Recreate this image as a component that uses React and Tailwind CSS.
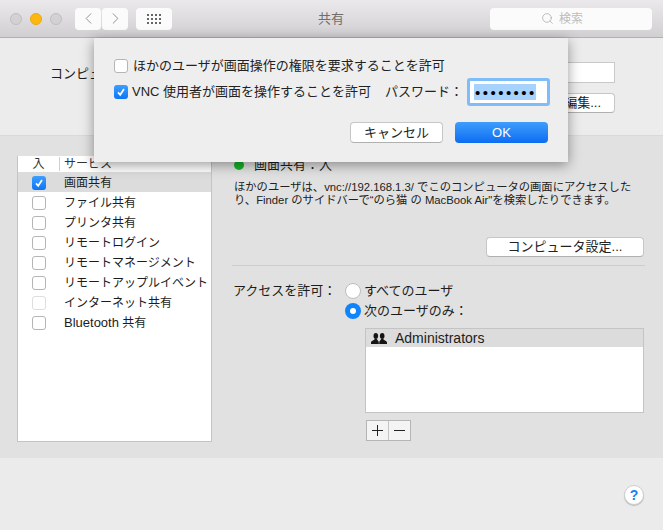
import { ChevronLeft, ChevronRight, Search } from "lucide-react";

const services = [
  { label: "画面共有", on: true },
  { label: "ファイル共有" },
  { label: "プリンタ共有" },
  { label: "リモートログイン" },
  { label: "リモートマネージメント" },
  { label: "リモートアップルイベント" },
  { label: "インターネット共有", dim: true },
  { label: <><span className="text-[13px]">Bluetooth</span> 共有</> },
];

const Check = ({ on, dim }) =>
  on ? (
    <span className="w-[14px] h-[14px] rounded-[3px] bg-gradient-to-b from-[#3d9fff] to-[#0a75f5] flex items-center justify-center shrink-0">
      <svg width="10" height="10" viewBox="0 0 10 10" fill="none">
        <path d="M2 5.4 L4.2 7.8 L8 2" stroke="#fff" strokeWidth="1.7" />
      </svg>
    </span>
  ) : (
    <span className={`w-[14px] h-[14px] rounded-[3px] bg-white border shrink-0 ${dim ? "border-[#dedede]" : "border-[#b5b5b5]"}`} />
  );

const PushButton = ({ children, className = "" }) => (
  <div className={`rounded-[4px] bg-white border border-[#c6c6c6] border-b-[#b0b0b0] flex items-center text-[13px] text-[#222] ${className}`}>
    {children}
  </div>
);

const People = () => (
  <svg width="16" height="11" viewBox="0 0 16 11" fill="#141414">
    <ellipse cx="4.8" cy="3" rx="2.3" ry="3" />
    <ellipse cx="11.2" cy="3" rx="2.3" ry="3" />
    <path d="M0 11 V9.6 C0 7.8 3 7.6 3.8 6 H5.8 C6.6 7.6 7.8 7.8 7.8 9.6 V11 Z" />
    <path d="M8.2 11 V9.6 C8.2 7.8 9.4 7.6 10.2 6 H12.2 C13 7.6 16 7.8 16 9.6 V11 Z" />
  </svg>
);

export default function App() {
  return (
    <div className="relative w-[663px] h-[530px] overflow-hidden bg-[#ebebeb] text-[13px] text-[#1c1c1c] font-['Liberation_Sans','Noto_Sans_CJK_JP',sans-serif]">
      {/* Title bar */}
      <div className="relative h-[38px] border-b border-[#b1b1b1] bg-gradient-to-b from-[#ebe9eb] to-[#d1cfd1] flex items-center pl-[10px]">
        <div className="flex items-center gap-2">
          <span className="w-[12px] h-[12px] rounded-full bg-[#d3d1d3] border border-[#c0bec0]" />
          <span className="w-[12px] h-[12px] rounded-full bg-[#fdb70e] border border-[#eaa90c]" />
          <span className="w-[12px] h-[12px] rounded-full bg-[#d3d1d3] border border-[#c0bec0]" />
        </div>
        <div className="flex gap-px ml-[13px]">
          <div className="w-[26px] h-[22px] rounded-[4px] bg-[#fbfbfb] flex items-center justify-center">
            <ChevronLeft size={19} strokeWidth={1.2} className="text-[#8d8d8d]" />
          </div>
          <div className="w-[26px] h-[22px] rounded-[4px] bg-[#fbfbfb] flex items-center justify-center">
            <ChevronRight size={19} strokeWidth={1.2} className="text-[#8d8d8d]" />
          </div>
        </div>
        <div className="w-[36px] h-[22px] ml-[8px] rounded-[4px] bg-[#fbfbfb] grid grid-cols-[repeat(4,2px)] grid-rows-[repeat(3,2px)] gap-[2px] content-center justify-center">
          {Array.from({ length: 12 }).map((_, i) => (
            <span key={i} className="bg-[#666]" />
          ))}
        </div>
        <span className="ml-[146px] text-[13px] text-[#6e6e6e]">共有</span>
        <div className="ml-[146px] w-[162px] h-[22px] rounded-[4px] bg-[#fbfbfb] flex items-center pl-[51px] gap-[5px] text-[12px] text-[#bdbdbd]">
          <Search size={13} strokeWidth={1.3} className="text-[#a5a5a5]" />
          <span>検索</span>
        </div>
      </div>

      {/* Computer name */}
      <div className="h-[98px] border-b border-[#d9d9d9] bg-[#ececec] flex">
        <span className="ml-[50px] mt-[27px] leading-[18px]">コンピュータ名:</span>
        <div className="ml-auto mr-[48px] mt-[24px] flex flex-col items-end gap-[10px]">
          <div className="w-[120px] h-[21px] bg-white border border-[#c9c9c9]" />
          <PushButton className="w-[100px] h-[20px] justify-end pr-[13px]">編集...</PushButton>
        </div>
      </div>

      {/* Main pane */}
      <div className="h-[322px] bg-[#e1e1e1] flex pt-[20px] pl-[17px]">
        <div className="w-[195px] h-[286px] bg-white border border-[#c4c4c4] border-t-0 shrink-0">
          <div className="h-[16px] flex items-center text-[12px] text-[#333]">
            <span className="w-[42px] text-center border-r border-[#cfcfcf] leading-[14px]">入</span>
            <span className="ml-[4px]">サービス</span>
          </div>
          {services.map((s, i) => (
            <div key={i} className={`h-[20px] pt-[2px] flex items-center text-[12px] ${s.on ? "bg-[#dcdcdc]" : ""}`}>
              <span className="w-[46px] pl-[14px] flex shrink-0">
                <Check on={s.on} dim={s.dim} />
              </span>
              <span className="whitespace-nowrap">{s.label}</span>
            </div>
          ))}
        </div>

        <div className="w-[413px] ml-[20px] flex flex-col">
          <div className="flex items-center h-[18px] pl-[2px]">
            <span className="w-[10px] h-[10px] rounded-full bg-[#15b52a]" />
            <span className="ml-[10px]">画面共有：入</span>
          </div>
          <p className="mt-[7px] pl-[2px] text-[11.3px] leading-[13px] text-[#222] whitespace-nowrap">
            ほかのユーザは、vnc://192.168.1.3/ でこのコンピュータの画面にアクセスした
            <br />
            り、Finder のサイドバーで“のら猫 の MacBook Air"を検索したりできます。
          </p>
          <PushButton className="w-[158px] h-[20px] justify-center self-end mr-px mt-[30px]">コンピュータ設定...</PushButton>
          <div className="h-px bg-[#cdcdcd] mt-[8px]" />

          <div className="flex mt-[15px]">
            <span className="w-[113px] pl-[1px] leading-[20px]">アクセスを許可：</span>
            <div className="flex flex-col">
              <div className="flex items-center h-[20px] gap-[3px]">
                <span className="w-[16px] h-[16px] rounded-full bg-white border border-[#bdbdbd]" />
                <span>すべてのユーザ</span>
              </div>
              <div className="flex items-center h-[20px] gap-[3px]">
                <span className="w-[16px] h-[16px] rounded-full bg-[#0f84fb] flex items-center justify-center">
                  <span className="w-[6px] h-[6px] rounded-full bg-white" />
                </span>
                <span>次のユーザのみ：</span>
              </div>
            </div>
          </div>

          <div className="ml-[133px] mt-[7px] w-[279px] h-[85px] bg-white border border-[#c4c4c4]">
            <div className="h-[18px] bg-[#dcdcdc] flex items-center pl-[5px] gap-[8px] text-[14px]">
              <People />
              <span>Administrators</span>
            </div>
          </div>

          <div className="ml-[134px] mt-[7px] w-[45px] h-[21px] flex border border-[#b5b5b5] bg-[#f4f4f4]">
            <span className="flex-1 flex items-center justify-center border-r border-[#c4c4c4]">
              <svg width="13" height="13" viewBox="0 0 13 13" stroke="#222" strokeWidth="1">
                <path d="M6.5 1 V12 M1 6.5 H12" />
              </svg>
            </span>
            <span className="flex-1 flex items-center justify-center">
              <svg width="13" height="13" viewBox="0 0 13 13" stroke="#222" strokeWidth="1">
                <path d="M1 6.5 H12" />
              </svg>
            </span>
          </div>
        </div>
      </div>

      {/* Footer */}
      <div className="h-[72px] flex justify-end pr-[19px] pt-[27px]">
        <div className="w-[20px] h-[20px] rounded-full bg-white border border-[#cfcfcf] shadow-[0_1px_1px_rgba(0,0,0,0.2)] flex items-center justify-center text-[14px] font-bold text-[#1a7ff0]">
          ?
        </div>
      </div>

      {/* Sheet over the window */}
      <div className="absolute left-[94px] top-[38px] w-[474px] h-[124px] bg-[#eeeeee] shadow-[0_3px_12px_rgba(0,0,0,0.4)] pl-[20px] pt-[19px]">
        <div className="flex items-center h-[18px] gap-[5px]">
          <Check />
          <span className="text-[#222]">ほかのユーザが画面操作の権限を要求することを許可</span>
        </div>
        <div className="flex items-center h-[28px] mt-[3px] gap-[4px]">
          <Check on />
          <span className="text-[#222]">VNC 使用者が画面を操作することを許可</span>
          <span className="ml-[10px] text-[#222]">パスワード：</span>
          <div className="w-[83px] h-[28px] bg-white border-[3px] border-[#7fbdf9] rounded-[3px] flex items-center pl-[4px]">
            <span className="bg-[#a7d2fd] h-[16px] w-[62px] pl-[1px] flex items-center text-[15px] tracking-[2.45px] leading-none text-black whitespace-nowrap overflow-hidden">
              ••••••••
            </span>
          </div>
        </div>
        <div className="flex justify-end gap-[12px] mt-[16px] pr-[20px]">
          <PushButton className="w-[93px] h-[21px] justify-center">キャンセル</PushButton>
          <div className="w-[93px] h-[21px] rounded-[4px] bg-gradient-to-b from-[#3f9dfc] to-[#0a6cf2] flex items-center justify-center text-white">
            OK
          </div>
        </div>
      </div>
    </div>
  );
}
